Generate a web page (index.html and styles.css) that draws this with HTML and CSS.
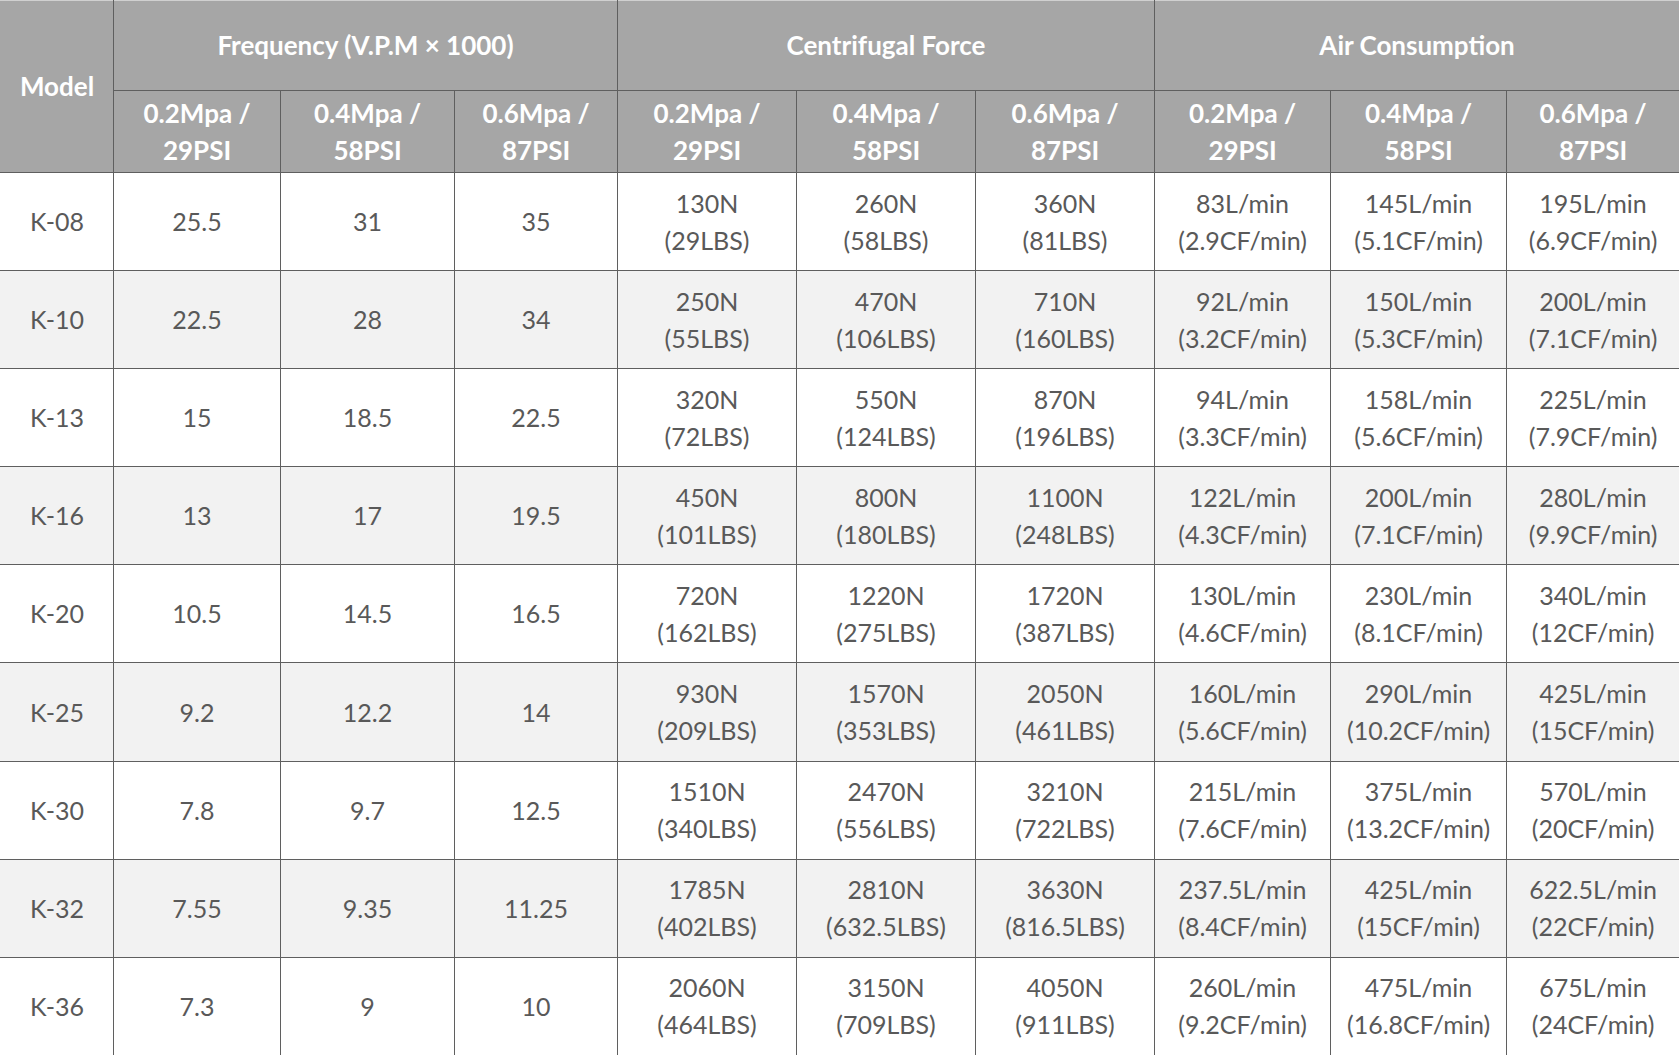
FILE: index.html
```html
<!DOCTYPE html>
<html>
<head>
<meta charset="utf-8">
<link rel="stylesheet" href="styles.css">
</head>
<body>
<table class="spec">
  <colgroup>
    <col class="c-model"><col class="c1"><col class="c2"><col class="c3"><col class="c4"><col class="c5"><col class="c6"><col class="c7"><col class="c8"><col class="c9">
  </colgroup>
  <thead>
    <tr class="h1">
      <th rowspan="2">Model</th>
      <th colspan="3">Frequency (V.P.M × 1000)</th>
      <th colspan="3">Centrifugal Force</th>
      <th colspan="3">Air Consumption</th>
    </tr>
    <tr class="h2">
      <th>0.2Mpa /<br>29PSI</th><th>0.4Mpa /<br>58PSI</th><th>0.6Mpa /<br>87PSI</th>
      <th>0.2Mpa /<br>29PSI</th><th>0.4Mpa /<br>58PSI</th><th>0.6Mpa /<br>87PSI</th>
      <th>0.2Mpa /<br>29PSI</th><th>0.4Mpa /<br>58PSI</th><th>0.6Mpa /<br>87PSI</th>
    </tr>
  </thead>
  <tbody>
    <tr><td>K-08</td><td>25.5</td><td>31</td><td>35</td><td>130N<br>(29LBS)</td><td>260N<br>(58LBS)</td><td>360N<br>(81LBS)</td><td>83L/min<br>(2.9CF/min)</td><td>145L/min<br>(5.1CF/min)</td><td>195L/min<br>(6.9CF/min)</td></tr>
    <tr><td>K-10</td><td>22.5</td><td>28</td><td>34</td><td>250N<br>(55LBS)</td><td>470N<br>(106LBS)</td><td>710N<br>(160LBS)</td><td>92L/min<br>(3.2CF/min)</td><td>150L/min<br>(5.3CF/min)</td><td>200L/min<br>(7.1CF/min)</td></tr>
    <tr><td>K-13</td><td>15</td><td>18.5</td><td>22.5</td><td>320N<br>(72LBS)</td><td>550N<br>(124LBS)</td><td>870N<br>(196LBS)</td><td>94L/min<br>(3.3CF/min)</td><td>158L/min<br>(5.6CF/min)</td><td>225L/min<br>(7.9CF/min)</td></tr>
    <tr><td>K-16</td><td>13</td><td>17</td><td>19.5</td><td>450N<br>(101LBS)</td><td>800N<br>(180LBS)</td><td>1100N<br>(248LBS)</td><td>122L/min<br>(4.3CF/min)</td><td>200L/min<br>(7.1CF/min)</td><td>280L/min<br>(9.9CF/min)</td></tr>
    <tr><td>K-20</td><td>10.5</td><td>14.5</td><td>16.5</td><td>720N<br>(162LBS)</td><td>1220N<br>(275LBS)</td><td>1720N<br>(387LBS)</td><td>130L/min<br>(4.6CF/min)</td><td>230L/min<br>(8.1CF/min)</td><td>340L/min<br>(12CF/min)</td></tr>
    <tr><td>K-25</td><td>9.2</td><td>12.2</td><td>14</td><td>930N<br>(209LBS)</td><td>1570N<br>(353LBS)</td><td>2050N<br>(461LBS)</td><td>160L/min<br>(5.6CF/min)</td><td>290L/min<br>(10.2CF/min)</td><td>425L/min<br>(15CF/min)</td></tr>
    <tr><td>K-30</td><td>7.8</td><td>9.7</td><td>12.5</td><td>1510N<br>(340LBS)</td><td>2470N<br>(556LBS)</td><td>3210N<br>(722LBS)</td><td>215L/min<br>(7.6CF/min)</td><td>375L/min<br>(13.2CF/min)</td><td>570L/min<br>(20CF/min)</td></tr>
    <tr><td>K-32</td><td>7.55</td><td>9.35</td><td>11.25</td><td>1785N<br>(402LBS)</td><td>2810N<br>(632.5LBS)</td><td>3630N<br>(816.5LBS)</td><td>237.5L/min<br>(8.4CF/min)</td><td>425L/min<br>(15CF/min)</td><td>622.5L/min<br>(22CF/min)</td></tr>
    <tr><td>K-36</td><td>7.3</td><td>9</td><td>10</td><td>2060N<br>(464LBS)</td><td>3150N<br>(709LBS)</td><td>4050N<br>(911LBS)</td><td>260L/min<br>(9.2CF/min)</td><td>475L/min<br>(16.8CF/min)</td><td>675L/min<br>(24CF/min)</td></tr>
  </tbody>
</table>
</body>
</html>
```

FILE: styles.css
```css
html, body {
  margin: 0;
  padding: 0;
  background: #ffffff;
}

.spec {
  width: 1679px;
  border-collapse: collapse;
  table-layout: fixed;
  font-family: Lato, "Open Sans", sans-serif;
  font-size: 25px;
  line-height: 37px;
  color: #595959;
}

.c-model { width: 113px; }
.c1 { width: 167px; }
.c2 { width: 174px; }
.c3 { width: 163px; }
.c4 { width: 179px; }
.c5 { width: 179px; }
.c6 { width: 179px; }
.c7 { width: 176px; }
.c8 { width: 176px; }
.c9 { width: 173px; }

.spec th,
.spec td {
  border: 1px solid #5f5f5f;
  text-align: center;
  vertical-align: middle;
  padding: 0;
}

.spec th {
  background: #a6a6a6;
  color: #ffffff;
  font-weight: 700;
  font-size: 26px;
}

.spec thead tr:first-child th {
  border-top-color: #d0d0d0;
}

.spec th:first-child,
.spec td:first-child {
  border-left-color: #a6a6a6;
}

.h1 { height: 90px; }
.h2 { height: 82px; }

.spec tbody tr { height: 98.1px; }
.spec tbody tr:nth-child(even) td { background: #f2f2f2; }
.spec tbody td:first-child { border-left-color: #ffffff; }
.spec tbody tr:nth-child(even) td:first-child { border-left-color: #f2f2f2; }
```
